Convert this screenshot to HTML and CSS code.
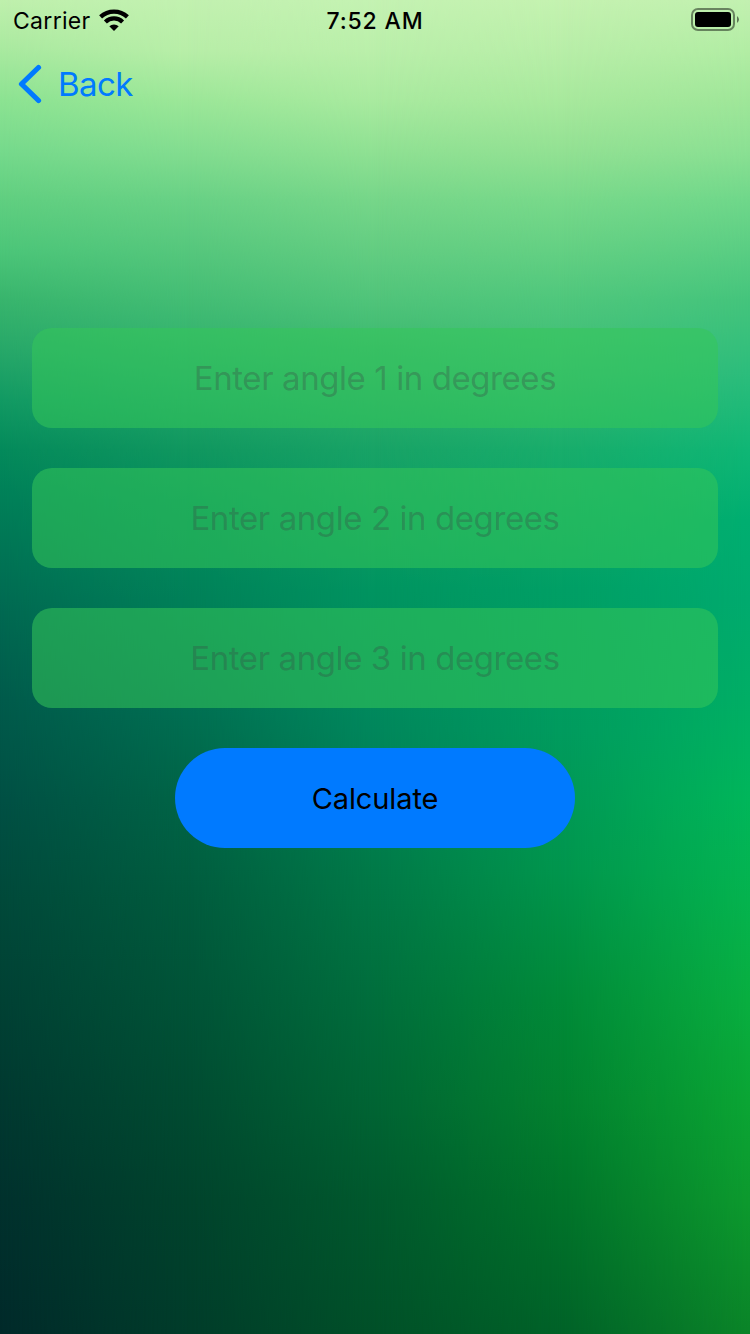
FILE: index.html
```html
<!DOCTYPE html>
<html lang="en">
<head>
<meta charset="utf-8">
<title>Angles</title>
<link rel="stylesheet" href="styles.css">
</head>
<body>
<div class="screen">
  <div class="backdrop">
    <div class="shade shade-1"></div>
    <div class="shade shade-2"></div>
    <div class="shade shade-3"></div>
    <div class="shade shade-4"></div>
    <div class="shade shade-5"></div>
  </div>
  <header class="status">
    <div class="status-left">
      <span class="carrier">Carrier</span>
      <svg class="wifi" width="30" height="22" viewBox="0 0 30 22">
        <path d="M1.600 7.900A19.500 19.500 0 0 1 28.400 7.900" fill="none" stroke="#000" stroke-width="4.3"/>
        <path d="M6.400 13A12.200 12.200 0 0 1 23.600 13" fill="none" stroke="#000" stroke-width="4.2"/>
        <path d="M10.300 17.200A7 7 0 0 1 19.700 17.200L15 21.900Z"/>
      </svg>
    </div>
    <span class="time">7:52 AM</span>
    <div class="status-right">
      <svg class="battery" width="48" height="24" viewBox="0 0 48 24">
        <rect x="1" y="1" width="42" height="21" rx="6" fill="none" stroke="#000" stroke-opacity=".45" stroke-width="2"/>
        <rect x="4" y="4" width="36" height="15" rx="3"/>
        <path d="M46 8Q50 11.5 46 15Z" fill-opacity=".5"/>
      </svg>
    </div>
  </header>
  <nav class="nav">
    <svg class="chevron" width="24" height="40" viewBox="0 0 24 40">
      <path d="M20.5 3.5L3.5 20L20.5 36.500" fill="none" stroke="#007aff" stroke-width="5.2" stroke-linecap="round" stroke-linejoin="round"/>
    </svg>
    <span class="back">Back</span>
  </nav>
  <main class="form">
    <div class="field"><span>Enter angle 1 in degrees</span></div>
    <div class="field"><span>Enter angle 2 in degrees</span></div>
    <div class="field"><span>Enter angle 3 in degrees</span></div>
    <button class="calculate"><span>Calculate</span></button>
  </main>
</div>
</body>
</html>
```
FILE: styles.css
```css
* { box-sizing: border-box; }
body { margin: 0; font-family: Inter, "Liberation Sans", sans-serif; }
.screen { position: relative; width: 750px; height: 1334px; overflow: hidden; display: flex; flex-direction: column; isolation: isolate; }

/* Vertical colour ramps, cross-faded from left to right */
.backdrop { position: absolute; inset: 0; z-index: -1; }
.shade { position: absolute; inset: 0; }
.shade-1 { background: linear-gradient(#bff0ad 0, #aeeba2 40px, #8ce392 100px, #76da8c 150px, #60cf80 200px, #4cc679 250px, #38b56d 300px, #27a869 350px, #129a63 400px, #048a5b 450px, #007f58 500px, #006b52 600px, #005b4b 700px, #005044 800px, #00493a 900px, #004134 1000px, #003930 1100px, #00312d 1200px, #002a2a 1334px); }
.shade-2 { background: linear-gradient(#c2f1b0 0, #b8eea8 50px, #9ce798 100px, #83dd90 150px, #68d185 200px, #43bd74 300px, #1fa568 400px, #10975f 450px, #048e5d 500px, #008058 600px, #007053 700px, #006446 800px, #005b3d 900px, #005337 1000px, #004b31 1100px, #00432c 1200px, #003c2a 1334px); mask-image: linear-gradient(90deg, transparent 0, #000 187px); }
.shade-3 { background: linear-gradient(#c4f2b2 0, #baefaa 50px, #a9ea9f 100px, #90e193 150px, #76d689 200px, #50c47a 300px, #3bb86f 350px, #18a366 450px, #009460 590px, #00875c 730px, #007a48 870px, #006e3c 1000px, #006534 1100px, #00592d 1200px, #005028 1334px); mask-image: linear-gradient(90deg, transparent 187px, #000 375px); }
.shade-4 { background: linear-gradient(#c4f2b0 0, #b8eea8 50px, #a8e99d 100px, #93e193 150px, #78d98a 200px, #4fc77c 300px, #3abb75 370px, #18ad6b 450px, #009f65 590px, #009b5e 730px, #00964d 870px, #008a38 1000px, #02822f 1100px, #00742a 1200px, #006228 1334px); mask-image: linear-gradient(90deg, transparent 375px, #000 562px); }
.shade-5 { background: linear-gradient(#c2f0b0 0, #b2eda4 50px, #9fe699 100px, #8be093 150px, #6fd78a 200px, #44c47c 300px, #2dbd7c 370px, #0fb675 450px, #00ae70 520px, #00aa6e 600px, #00ae65 700px, #00b65a 800px, #04b34e 900px, #08ae40 1000px, #0aa534 1100px, #0c9a2e 1200px, #0a8428 1334px); mask-image: linear-gradient(90deg, transparent 562px, #000 750px); }

.status { height: 40px; display: grid; grid-template-columns: 1fr auto 1fr; align-items: center; padding: 0 11px 0 13px; font-size: 23px; line-height: 42px; }
.status-left { display: flex; align-items: center; gap: 8.500px; }
.wifi, .battery { margin-bottom: 2px; }
.carrier { letter-spacing: .3px; }
.time { font-weight: 500; letter-spacing: .85px; margin: 0 2px 0 0; }
.status-right { display: flex; justify-content: flex-end; }
.nav { height: 88px; display: flex; align-items: center; gap: 16px; padding-left: 18px; }
.back { color: #007aff; font-size: 33px; letter-spacing: -.6px; }
.form { padding: 200px 32px 0; display: flex; flex-direction: column; align-items: center; gap: 40px; }
.field { width: 100%; height: 100px; border-radius: 20px; background: rgba(52, 199, 89, .55); color: rgba(60, 60, 67, .3); display: flex; align-items: center; justify-content: center; font-size: 33px; letter-spacing: -.42px; white-space: nowrap; }
.calculate { width: 400px; height: 100px; border: 0; border-radius: 50px; background: #007aff; color: #000; font: 29px Inter, "Liberation Sans", sans-serif; letter-spacing: -.1px; padding: 0; }
```
